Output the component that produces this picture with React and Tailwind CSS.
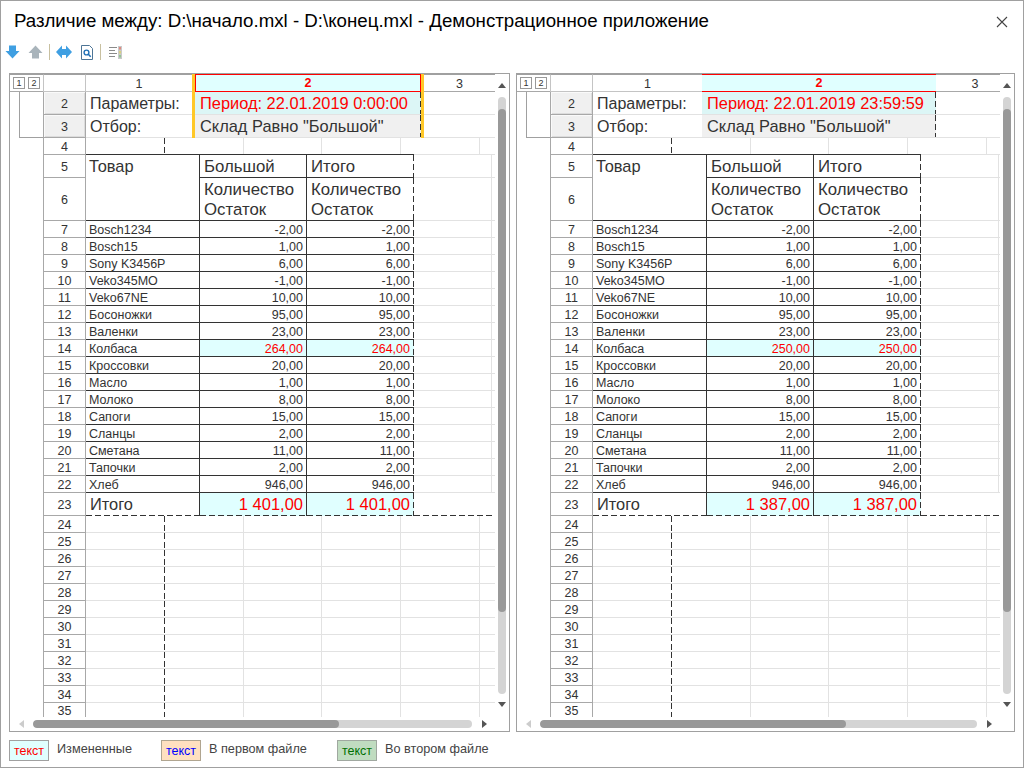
const rows = [
  ["Bosch1234", "-2,00"],
  ["Bosch15", "1,00"],
  ["Sony K3456P", "6,00"],
  ["Veko345MO", "-1,00"],
  ["Veko67NE", "10,00"],
  ["Босоножки", "95,00"],
  ["Валенки", "23,00"],
  ["Колбаса", null],
  ["Кроссовки", "20,00"],
  ["Масло", "1,00"],
  ["Молоко", "8,00"],
  ["Сапоги", "15,00"],
  ["Сланцы", "2,00"],
  ["Сметана", "11,00"],
  ["Тапочки", "2,00"],
  ["Хлеб", "946,00"],
];

const emptyRows = [24, 25, 26, 27, 28, 29, 30, 31, 32, 33, 34];

// print boundary lines, long dashes like the original sheet
const dashRight =
  "bg-[repeating-linear-gradient(to_bottom,#333_0,#333_6px,transparent_6px,transparent_9px)] bg-[length:1px_100%] bg-no-repeat bg-[position:right_top]";
const dashBottom =
  "bg-[repeating-linear-gradient(to_right,#333_0,#333_6px,transparent_6px,transparent_9px)] bg-[length:100%_1px] bg-no-repeat bg-[position:left_bottom]";

const RowNo = ({ n, selected, className = "" }) => (
  <div
    className={`w-[43px] shrink-0 flex items-center justify-center pt-px border-x border-b border-[#a8a8a8] text-[12.5px] leading-[14px] text-[#333] ${
      selected ? "bg-[#f0f0f0] shadow-[inset_1px_1px_0_#fafafa,inset_-1px_-1px_0_#dcdcdc]" : "bg-white"
    } ${className}`}
  >
    {n}
  </div>
);

// blank grid row, cut by the dashed print boundary at the first column
const GridRow = ({ n, last }) => (
  <div className={`flex shrink-0 ${last ? "h-[14px]" : "h-[17px]"}`}>
    <div className="w-[33px] shrink-0" />
    <RowNo n={n} className={last ? "border-b-0 !pt-[2px] !leading-[12px]" : ""} />
    <div className={`w-[79px] shrink-0 ${dashRight} ${last ? "" : "border-b border-b-[#e2e2e2]"}`} />
    <div className={`w-[79px] shrink-0 border-r border-r-[#e2e2e2] ${last ? "" : "border-b border-b-[#e2e2e2]"}`} />
    <div className={`w-[78px] shrink-0 border-r border-r-[#e2e2e2] ${last ? "" : "border-b border-b-[#e2e2e2]"}`} />
    <div className={`w-[79px] shrink-0 border-r border-r-[#e2e2e2] ${last ? "" : "border-b border-b-[#e2e2e2]"}`} />
    <div className={`w-[79px] shrink-0 border-r border-r-[#e2e2e2] ${last ? "" : "border-b border-b-[#e2e2e2]"}`} />
    <div className={`flex-1 ${last ? "" : "border-b border-b-[#e2e2e2]"}`} />
  </div>
);

const TableRow = ({ n, name, a, b, changed }) => (
  <div className="flex h-[17px] shrink-0 text-[12.5px] leading-[16px] text-[#333]">
    <div className="w-[33px] shrink-0" />
    <RowNo n={n} />
    <div className="w-[114px] shrink-0 h-[17px] border-b border-r border-[#333] pl-[3px] pt-px whitespace-nowrap">{name}</div>
    <div
      className={`w-[107px] shrink-0 h-[17px] border-b border-r border-[#333] pr-[3px] pt-px text-right ${
        changed ? "bg-[#e0ffff] text-[#f00]" : ""
      }`}
    >
      {a}
    </div>
    <div
      className={`w-[107px] shrink-0 h-[17px] border-b border-b-[#333] pr-[4px] pt-px text-right ${dashRight} ${
        changed ? "bg-[#e0ffff] text-[#f00]" : ""
      }`}
    >
      {b}
    </div>
    <div className="w-[78px] shrink-0 border-r border-r-[#e2e2e2] border-b border-b-[#e2e2e2]" />
    <div className="flex-1 border-b border-b-[#e2e2e2]" />
  </div>
);

const Sheet = ({ col1, col2, col3, period, changedVal, total, accent, paneClass, trackWidth }) => (
  <div className={`flex flex-col border border-[#a0a0a0] bg-white overflow-hidden ${paneClass}`}>
    <div className="flex flex-1 min-h-0">
      <div className="flex-1 min-w-0 overflow-hidden flex flex-col">
        {/* column header */}
        <div className="flex h-[18px] shrink-0 text-[12.5px] text-[#333]">
          <div className="w-[33px] shrink-0 flex items-center gap-[3px] pl-[3px] border-t border-t-[#a0a0a0] border-b border-b-[#a8a8a8]">
            <span className="w-[12px] h-[12px] border border-[#999] text-[9px] leading-[10px] text-center">1</span>
            <span className="w-[12px] h-[12px] border border-[#999] text-[9px] leading-[10px] text-center">2</span>
          </div>
          <div className="w-[43px] shrink-0 border-x border-x-[#c4c4c4] border-t border-t-[#a0a0a0] border-b border-b-[#c4c4c4]" />
          <div
            style={{ width: col1 }}
            className="shrink-0 text-center border-t border-t-[#a0a0a0] border-b border-b-[#c4c4c4] leading-[19px]"
          >
            1
          </div>
          <div
            style={{ width: col2 }}
            className={`shrink-0 flex ${accent ? "border-x-[3px] border-x-[#ffc828]" : ""}`}
          >
            <div
              className={`flex-1 text-center font-bold text-[#f00] bg-[#e0ffff] leading-[17px] ${
                accent ? "border border-[#f00]" : "border-y border-y-[#f00]"
              }`}
            >
              2
            </div>
          </div>
          <div
            style={{ width: col3 }}
            className="shrink-0 text-center border-t border-t-[#a0a0a0] border-b border-b-[#a8a8a8] leading-[19px]"
          >
            3
          </div>
        </div>

        {/* report params with the outline bracket */}
        <div className="flex shrink-0">
          <div className="w-[33px] shrink-0 pl-[9px]">
            <div className="h-[46px] border-l border-b border-[#a0a0a0]" />
          </div>
          <div className="flex flex-col flex-1 min-w-0 text-[16.4px] text-[#333]">
            {[
              [2, "Параметры:", period, true],
              [3, "Отбор:", 'Склад Равно "Большой"', false],
            ].map(([n, label, value, red]) => (
              <div key={n} className="flex h-[23px]">
                <RowNo n={n} selected />
                <div
                  style={{ width: col1 }}
                  className="shrink-0 pl-[4px] leading-[23px] border-b border-[#e2e2e2] text-[16px] whitespace-nowrap"
                >
                  {label}
                </div>
                <div
                  style={{ width: col2 }}
                  className={`shrink-0 flex ${accent ? "border-x-[3px] border-x-[#ffc828]" : ""}`}
                >
                  <div
                    className={`flex-1 pl-[5px] leading-[22px] border-b border-[#e2e2e2] whitespace-nowrap ${dashRight} ${
                      red ? "bg-[#dcf6f6] text-[#f00]" : "bg-[#f0f0f0]"
                    }`}
                  >
                    {value}
                  </div>
                </div>
                <div style={{ width: col3 }} className="shrink-0 border-b border-[#e2e2e2]" />
              </div>
            ))}
          </div>
        </div>

        <GridRow n={4} />

        {/* report table head */}
        <div className="flex shrink-0 text-[16.8px] text-[#333]">
          <div className="w-[33px] shrink-0" />
          <div className="flex flex-col w-[43px] shrink-0">
            <RowNo n={5} className="h-[23px]" />
            <RowNo n={6} className="h-[43px]" />
          </div>
          <div className="w-[114px] shrink-0 border-r border-b border-t border-[#333] pl-[3px] leading-[22px] -mt-px text-[16.4px]">
            Товар
          </div>
          <div className="w-[107px] shrink-0 flex flex-col -mt-px">
            <div className="h-[24px] border-t border-r border-b border-[#333] pl-[4px] leading-[23px]">Большой</div>
            <div className="h-[43px] border-r border-b border-[#333] pl-[4px] pt-[2px] leading-[20px] whitespace-nowrap">
              Количество
              <br />
              Остаток
            </div>
          </div>
          <div className="w-[107px] shrink-0 flex flex-col -mt-px">
            <div className={`h-[24px] border-t border-b border-[#333] pl-[4px] leading-[23px] ${dashRight}`}>Итого</div>
            <div className={`h-[43px] border-b border-b-[#333] pl-[4px] pt-[2px] leading-[20px] whitespace-nowrap ${dashRight}`}>
              Количество
              <br />
              Остаток
            </div>
          </div>
          <div className="w-[78px] shrink-0 flex flex-col">
            <div className="h-[23px] border-r border-b border-[#e2e2e2]" />
            <div className="h-[43px] border-r border-b border-[#e2e2e2]" />
          </div>
          <div className="flex flex-col flex-1">
            <div className="h-[23px] border-b border-[#e2e2e2]" />
            <div className="h-[43px] border-b border-[#e2e2e2]" />
          </div>
        </div>

        {rows.map(([name, val], i) => (
          <TableRow
            key={name}
            n={i + 7}
            name={name}
            a={val ?? changedVal}
            b={val ?? changedVal}
            changed={val === null}
          />
        ))}

        {/* total row */}
        <div className="flex h-[23px] shrink-0 text-[#333]">
          <div className="w-[33px] shrink-0" />
          <RowNo n={23} />
          <div className={`w-[114px] shrink-0 border-r border-r-[#333] pl-[4px] text-[16.4px] leading-[22px] ${dashBottom}`}>
            Итого
          </div>
          <div
            className={`w-[107px] shrink-0 bg-[#e0ffff] text-[#f00] border-r border-r-[#333] text-right pr-[3px] text-[16.5px] leading-[22px] ${dashBottom}`}
          >
            {total}
          </div>
          <div className={`w-[107px] shrink-0 bg-[#e0ffff] ${dashBottom}`}>
            <div className={`h-full text-[#f00] text-right pr-[4px] text-[16.5px] leading-[22px] ${dashRight}`}>
              {total}
            </div>
          </div>
          <div className={`flex-1 ${dashBottom}`} />
        </div>

        {emptyRows.map((n) => (
          <GridRow key={n} n={n} />
        ))}
        <GridRow n={35} last />
      </div>

      {/* vertical scrollbar */}
      <div className="w-[14px] shrink-0 flex flex-col items-center bg-white">
        <div className="mt-[9px] w-0 h-0 border-x-[4px] border-x-transparent border-b-[5px] border-b-[#555]" />
        <div className="mt-[9px] w-[8px] h-[597px] shrink-0 bg-[#d4d4d4] rounded-[4px] overflow-hidden">
          <div className="mt-[12px] h-[503px] bg-[#999] rounded-[4px]" />
        </div>
        <div className="mt-[8px] w-0 h-0 border-x-[4px] border-x-transparent border-t-[5px] border-t-[#555]" />
      </div>
    </div>

    {/* horizontal scrollbar */}
    <div className="h-[14px] shrink-0 flex items-center pl-[9px]">
      <div className="w-0 h-0 border-y-[4px] border-y-transparent border-r-[5px] border-r-[#ccc]" />
      <div style={{ width: trackWidth }} className="ml-[9px] h-[8px] bg-[#d4d4d4] rounded-[4px] overflow-hidden">
        <div className="w-[306px] h-full bg-[#999] rounded-[4px]" />
      </div>
      <div className="ml-[10px] w-0 h-0 border-y-[4px] border-y-transparent border-l-[5px] border-l-[#555]" />
    </div>
  </div>
);

const Legend = ({ fg, bg, border, label, className }) => (
  <div className={`flex items-center ${className}`}>
    <div className={`w-[40px] h-[21px] border ${border} ${bg} ${fg} text-[12.5px] leading-[20px] text-center`}>
      текст
    </div>
    <span className="ml-[8px] text-[12.7px] text-[#444] -mt-px">{label}</span>
  </div>
);

export default function App() {
  return (
    <div className="w-[1024px] h-[768px] bg-white border border-[#a0a0a0] flex flex-col overflow-hidden font-['Liberation_Sans',Arial,sans-serif]">
      {/* title bar */}
      <div className="h-[41px] shrink-0 flex items-center justify-between pl-[13px] pr-[15px]">
        <span className="text-[18.7px] text-black whitespace-nowrap">
          Различие между: D:\начало.mxl - D:\конец.mxl - Демонстрационное приложение
        </span>
        <svg width="12" height="12" viewBox="0 0 12 12" stroke="#444" strokeWidth="1.1" fill="none">
          <path d="M1 1l10 10M11 1L1 11" />
        </svg>
      </div>

      {/* toolbar */}
      <div className="h-[20px] mb-[11px] shrink-0 flex items-center pl-[4px]">
        <svg width="15" height="14" viewBox="0 0 15 14" fill="#3f9fe2">
          <path d="M4 .5h7V6h3.5l-7 7.5L.5 6H4z" />
        </svg>
        <svg className="ml-[8px]" width="15" height="14" viewBox="0 0 15 14" fill="#a9b4bb">
          <path d="M7.5.5l7 7.5H11v5.5H4V8H.5z" />
        </svg>
        <div className="ml-[6px] w-px h-[16px] bg-[#c8c0a0]" />
        <svg className="ml-[6px]" width="16" height="14" viewBox="0 0 16 14" fill="#3f9fe2">
          <path d="M0 7l6-6.5V4h4V.5L16 7l-6 6.5V10H6v3.5z" />
        </svg>
        <svg className="ml-[9px]" width="12" height="15" viewBox="0 0 12 15" fill="none">
          <path d="M.5.5h8l3 3v11H.5z" fill="#fff" stroke="#4d7596" />
          <circle cx="5.5" cy="7.5" r="2.4" stroke="#1f6fb5" strokeWidth="1.4" />
          <path d="M7.3 9.3l2.4 2.4" stroke="#1f6fb5" strokeWidth="1.6" />
        </svg>
        <div className="ml-[7px] w-px h-[16px] bg-[#c8c0a0]" />
        <svg className="ml-[8px]" width="13" height="13" viewBox="0 0 13 13">
          <path d="M0 1.5h8M0 4.5h6M0 7.5h8M0 10.5h6" stroke="#8a8a8a" />
          <rect x="9" y="0" width="4" height="13" fill="#c9c9c9" />
          <rect x="10" y="1" width="2" height="2.5" fill="#e08a80" />
          <rect x="10" y="5" width="2" height="2.5" fill="#d9cf80" />
          <rect x="10" y="9" width="2" height="2.5" fill="#93c493" />
        </svg>
      </div>

      {/* two sheets */}
      <div className="h-[659px] shrink-0 flex pl-[8px] gap-[6px]">
        <Sheet
          col1={106}
          col2={232}
          col3={71}
          accent
          paneClass="w-[501px]"
          trackWidth={439}
          period="Период: 22.01.2019 0:00:00"
          changedVal="264,00"
          total="1 401,00"
        />
        <Sheet
          col1={109}
          col2={234}
          col3={78}
          paneClass="w-[499px]"
          trackWidth={437}
          period="Период: 22.01.2019 23:59:59"
          changedVal="250,00"
          total="1 387,00"
        />
      </div>

      {/* legend */}
      <div className="flex items-center pl-[8px] mt-[8px]">
        <Legend fg="text-[#f00]" bg="bg-[#e0ffff]" border="border-[#a0a0a0]" label="Измененные" className="w-[152px]" />
        <Legend fg="text-[#00f]" bg="bg-[#ffe0c0]" border="border-[#b0a590]" label="В первом файле" className="w-[176px]" />
        <Legend fg="text-[#007000]" bg="bg-[#c0dcc0]" border="border-[#a0a8a0]" label="Во втором файле" />
      </div>
    </div>
  );
}
